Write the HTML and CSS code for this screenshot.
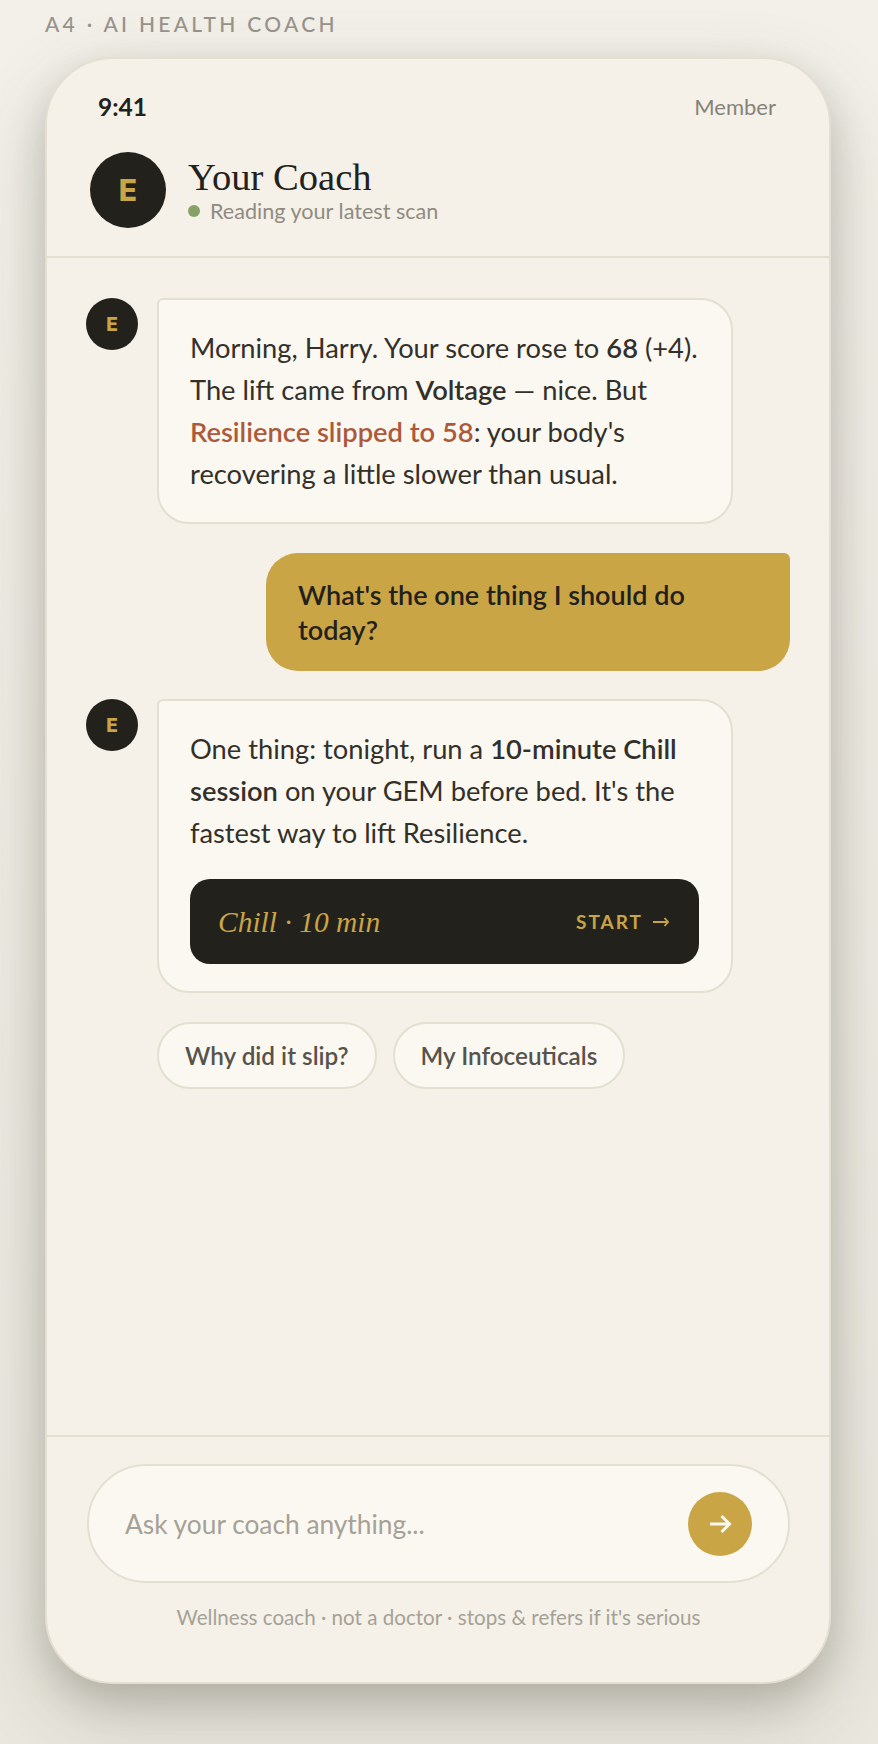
FILE: index.html
```html
<!DOCTYPE html>
<html lang="en">
<head>
    <meta charset="UTF-8">
    <meta name="viewport" content="width=device-width, initial-scale=1.0">
    <title>A4 AI Health Coach</title>
    <link rel="stylesheet" href="styles.css">
</head>
<body>
    <p class="screenLabel">A4 · AI HEALTH COACH</p>

    <div class="phone">
        <header class="coachHeader">
            <div class="statusBar">
                <span class="statusTime">9:41</span>
                <span class="statusMember">Member</span>
            </div>
            <div class="coachInfo">
                <div class="avatar avatarLarge">E</div>
                <div>
                    <h1 class="coachName">Your Coach</h1>
                    <p class="coachState"><span class="stateDot"></span>Reading your latest scan</p>
                </div>
            </div>
        </header>

        <main class="chat">
            <div class="coachRow">
                <div class="avatar">E</div>
                <div class="bubble">
                    Morning, Harry. Your score rose to <b>68</b> (+4).
                    The lift came from <b>Voltage</b> — nice. But
                    <b class="alert">Resilience slipped to 58</b>: your body's
                    recovering a little slower than usual.
                </div>
            </div>

            <div class="userBubble">What's the one thing I should do today?</div>

            <div class="coachRow">
                <div class="avatar">E</div>
                <div class="bubble">
                    One thing: tonight, run a <b>10-minute Chill session</b> on your GEM before bed. It's the fastest way to lift Resilience.
                    <div class="sessionCard">
                        <span class="sessionName">Chill · 10 min</span>
                        <span class="sessionStart">START
                            <svg class="startArrow" viewBox="0 0 16 10" fill="none" stroke="currentColor" stroke-width="1.8">
                                <path d="M0 5H15M11.5 1L15 5L11.5 9"/>
                            </svg>
                        </span>
                    </div>
                </div>
            </div>

            <div class="chips">
                <button class="chip">Why did it slip?</button>
                <button class="chip">My Infoceuticals</button>
            </div>
        </main>

        <footer class="composer">
            <div class="inputBox">
                <span class="inputHint">Ask your coach anything...</span>
                <button class="sendBtn" aria-label="Send">
                    <svg viewBox="0 0 24 24" fill="none" stroke="currentColor" stroke-width="3">
                        <path d="M2 12H21M13.5 4L21.5 12L13.5 20"/>
                    </svg>
                </button>
            </div>
            <p class="disclaimer">Wellness coach · not a doctor · stops &amp; refers if it's serious</p>
        </footer>
    </div>
</body>
</html>
```

FILE: styles.css
```css
* {
    box-sizing: border-box;
}

body {
    margin: 0;
    height: 1744px;
    padding: 0 47px 0 45px;
    overflow: hidden;
    background: linear-gradient(#f2f0e9, #e9e7de);
    font-family: "Lato", "Open Sans", sans-serif;
    color: #33302a;
}

.screenLabel {
    margin: 0;
    height: 57px;
    padding-top: 12px;
    font-size: 21px;
    line-height: 23px;
    font-weight: 500;
    letter-spacing: 3.3px;
    color: #96928a;
}

.phone {
    display: flex;
    flex-direction: column;
    height: 1627px;
    border: 2px solid #e3dfd1;
    border-radius: 68px;
    background: #f5f1e8;
    box-shadow: 0 16px 36px rgba(70, 65, 50, 0.2), 0 30px 80px rgba(70, 65, 50, 0.2);
}

.coachHeader {
    height: 199px;
    padding: 0 53px 0 43px;
    border-bottom: 2px solid #e3dfd1;
}

.statusBar {
    display: flex;
    justify-content: space-between;
    align-items: center;
    height: 34px;
    margin-top: 30px;
    padding-left: 8px;
}

.statusTime {
    font-size: 24.5px;
    font-weight: 700;
    color: #23211c;
}

.statusMember {
    font-size: 22px;
    color: #87837a;
}

.coachInfo {
    display: flex;
    align-items: center;
    gap: 22px;
    margin-top: 29px;
}

.avatar {
    display: flex;
    flex: none;
    justify-content: center;
    align-items: center;
    width: 52px;
    height: 52px;
    border-radius: 50%;
    background: #23211c;
    color: #c9a546;
    font-family: "Inter", sans-serif;
    font-size: 19px;
    font-weight: 800;
}

.avatarLarge {
    width: 76px;
    height: 76px;
    font-size: 30px;
}

.coachName {
    margin: 0;
    font-family: "Liberation Serif", serif;
    font-size: 38.6px;
    line-height: 42px;
    font-weight: 400;
    color: #23211c;
}

.coachState {
    display: flex;
    align-items: center;
    gap: 10px;
    margin: 0;
    font-size: 21.6px;
    line-height: 26px;
    color: #8f8b82;
}

.stateDot {
    width: 12px;
    height: 12px;
    border-radius: 50%;
    background: #86a266;
}

.chat {
    flex: 1;
    display: flex;
    flex-direction: column;
    padding: 40px 39px 0;
}

.coachRow {
    display: flex;
    gap: 19px;
}

.bubble {
    width: 576px;
    padding: 27px 27px 27px 31px;
    border: 2px solid #e3dfd1;
    border-radius: 6px 32px 32px 32px;
    background: #fbf8f1;
    font-size: 27.3px;
    line-height: 42px;
}

.bubble b {
    font-weight: 600;
}

.bubble .alert {
    color: #ab5a3c;
}

.userBubble {
    align-self: flex-end;
    width: 524px;
    margin: 29px 0 28px;
    padding: 24px 60px 24px 32px;
    border-radius: 32px 6px 32px 32px;
    background: #c9a546;
    font-size: 27px;
    line-height: 35px;
    font-weight: 600;
    color: #23211c;
}

.sessionCard {
    display: flex;
    justify-content: space-between;
    align-items: center;
    width: 509px;
    height: 85px;
    margin-top: 25px;
    padding: 0 30px 0 28px;
    border-radius: 20px;
    background: #23211c;
    color: #c9a546;
}

.sessionName {
    font-family: "Liberation Serif", serif;
    font-style: italic;
    font-size: 29.5px;
}

.sessionStart {
    display: flex;
    align-items: center;
    gap: 10px;
    font-size: 19px;
    font-weight: 700;
    letter-spacing: 2px;
}

.startArrow {
    width: 16px;
    height: 10px;
}

.chips {
    display: flex;
    gap: 16px;
    margin-top: 29px;
    padding-left: 71px;
}

.chip {
    height: 67px;
    padding: 0 26px;
    border: 2px solid #e3dfd1;
    border-radius: 34px;
    background: #fbf8f1;
    font-family: inherit;
    font-size: 24.3px;
    font-weight: 600;
    color: #57534b;
}

.composer {
    height: 247px;
    padding: 27px 39px 0 40px;
    border-top: 2px solid #e3dfd1;
}

.inputBox {
    display: flex;
    justify-content: space-between;
    align-items: center;
    height: 119px;
    padding: 0 36px 0 36px;
    border: 2px solid #e3dfd1;
    border-radius: 60px;
    background: #fbf8f1;
}

.inputHint {
    font-size: 26.3px;
    color: #a5a197;
}

.sendBtn {
    display: flex;
    justify-content: center;
    align-items: center;
    width: 64px;
    height: 64px;
    padding: 0;
    border: 0;
    border-radius: 50%;
    background: #c9a546;
    color: #fbf8f1;
}

.sendBtn svg {
    width: 24px;
    height: 24px;
}

.disclaimer {
    margin: 21px 0 0;
    text-align: center;
    font-size: 20.6px;
    line-height: 26px;
    color: #a5a197;
}
```
